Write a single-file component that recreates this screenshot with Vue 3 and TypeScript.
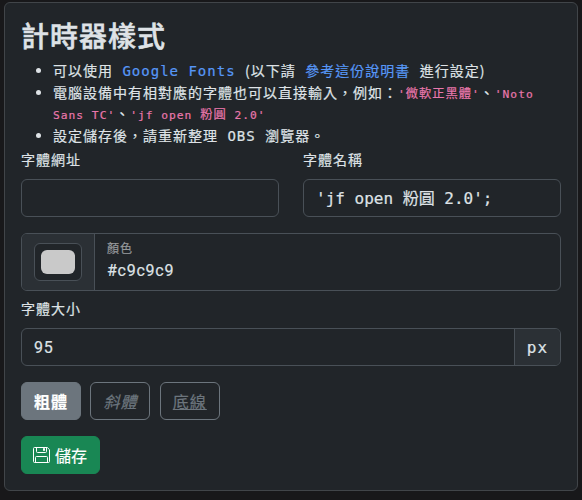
<script setup lang="ts">
import { ref } from 'vue'

const fontUrl = ref('')
const fontName = ref("'jf open 粉圓 2.0';")
const color = ref('#c9c9c9')
const fontSize = ref('95')
</script>

<template>
  <main class="card">
    <h3 class="title">計時器樣式</h3>
    <ul class="notes">
      <li>可以使用 <a class="link">Google Fonts</a> <span class="cjk">(</span>以下請 <a class="link">參考這份說明書</a> 進行設定<span class="cjk">)</span></li>
      <li class="double">電腦設備中有相對應的字體也可以直接輸入，例如：<code>'<span class="han">微軟正黑體</span>'</code>、<code>'Noto<br />Sans TC'</code>、<code>'jf open <span class="han">粉圓</span> 2.0'</code></li>
      <li>設定儲存後，請重新整理 OBS 瀏覽器。</li>
    </ul>
    <div class="row">
      <label class="field">
        <span class="label">字體網址</span>
        <input v-model="fontUrl" class="control" type="text" />
      </label>
      <label class="field">
        <span class="label">字體名稱</span>
        <input v-model="fontName" class="control" type="text" />
      </label>
    </div>
    <div class="group color-group">
      <div class="addon swatch-addon">
        <span class="swatch-frame"><span class="swatch" :style="{ background: color }"></span></span>
      </div>
      <label class="floating">
        <span class="hint">顏色</span>
        <input v-model="color" class="bare numeric" type="text" />
      </label>
    </div>
    <label class="size-field">
      <span class="label">字體大小</span>
      <span class="group size-group">
        <input v-model="fontSize" class="bare size-input numeric" type="text" />
        <span class="addon unit">px</span>
      </span>
    </label>
    <div class="toggles">
      <button class="btn active" type="button">粗體</button>
      <button class="btn italic" type="button">斜體</button>
      <button class="btn underline" type="button">底線</button>
    </div>
    <button class="btn save" type="button">
      <svg class="icon" viewBox="0 0 17 16" fill="none" stroke="currentColor" stroke-width="1">
        <path d="M1.500 .5h12.800l2.200 2.200v11.800a1 1 0 0 1-1 1h-14a1 1 0 0 1-1-1v-13a1 1 0 0 1 1-1z" />
        <path d="M3.500 .5v4a1 1 0 0 0 1 1h8a1 1 0 0 0 1-1v-4M2.500 15.500v-5a1 1 0 0 1 1-1h10a1 1 0 0 1 1 1v5" />
        <path d="M10.500 1.500h1v2h-1z" fill="currentColor" />
      </svg>
      <span>儲存</span>
    </button>
  </main>
</template>

<style>
body {
  background: #18181a;
}
</style>

<style scoped>
.card {
  box-sizing: border-box;
  width: 574px;
  height: 489px;
  margin: 2px 4px 9px;
  padding: 16px;
  border: 1px solid #414549;
  border-radius: 6px;
  background: #212529;
  color: #dee2e6;
  font-family: "DejaVu Sans Mono", "Noto Sans CJK TC", monospace;
  font-size: 14px;
  letter-spacing: 1px;
  -webkit-text-stroke: 0.2px;
}
.title {
  height: 36px;
  margin: 0 0 6px;
  padding-top: 1px;
  font-size: 28px;
  font-weight: 500;
  line-height: 36px;
  -webkit-text-stroke: 0.55px;
}
.notes {
  margin: -1px 0 3px;
  padding-left: 32px;
  line-height: 21.5px;
  list-style: none;
  white-space: nowrap;
}
.notes li {
  height: 21.5px;
}
.notes .double {
  height: 43px;
}
.notes li::before {
  content: "";
  display: inline-block;
  width: 5px;
  height: 5px;
  margin: 0 12.500px 0 -17.500px;
  border-radius: 50%;
  background: currentColor;
  vertical-align: 3px;
}
.cjk {
  font-family: "Noto Sans CJK TC", sans-serif;
  line-height: 0;
}
.link {
  color: #5797f7;
}
code {
  color: #e977ac;
  font-family: inherit;
  font-size: 11.25px;
  line-height: 0;
}
.han {
  font-size: 12.25px;
}
.row {
  display: grid;
  grid-template-columns: 1fr 1fr;
  gap: 24px;
  margin-bottom: 16px;
}
.label {
  display: block;
  height: 21px;
  margin-bottom: 8px;
  line-height: 21px;
}
.control,
.bare {
  box-sizing: border-box;
  width: 100%;
  border: 0;
  outline: 0;
  background: transparent;
  color: #dee2e6;
  font-family: inherit;
  font-size: 16px;
  letter-spacing: 0;
}
.control {
  display: block;
  height: 38px;
  padding: 5px 12px 7px;
  border: 1px solid #495057;
  border-radius: 6px;
}
.group {
  box-sizing: border-box;
  display: flex;
  overflow: hidden;
  border: 1px solid #495057;
  border-radius: 6px;
}
.addon {
  display: flex;
  align-items: center;
  justify-content: center;
  background: #2b3035;
}
.color-group {
  height: 58px;
  margin-bottom: 8px;
}
.swatch-addon {
  width: 72px;
  border-right: 1px solid #495057;
}
.swatch-frame {
  box-sizing: border-box;
  display: flex;
  width: 48px;
  height: 38px;
  padding: 6px;
  border: 1px solid #495057;
  border-radius: 6px;
  background: #212529;
}
.swatch {
  flex: 1;
  border-radius: 6px;
}
.floating {
  display: flex;
  flex: 1;
  flex-direction: column;
  padding: 6px 12px 0;
}
.hint {
  color: #94979a;
  font-size: 12px;
  line-height: 18px;
}
.bare {
  height: 24px;
  padding: 0;
}
.numeric {
  font-family: Roboto, sans-serif;
  letter-spacing: 0.75px;
}
.size-field {
  display: block;
}
.size-group {
  height: 38px;
}
.size-input {
  flex: 1;
  height: 36px;
  padding: 0 12px;
}
.unit {
  width: 45px;
  border-left: 1px solid #495057;
  font-size: 16px;
}
.toggles {
  display: flex;
  gap: 9.4px;
  margin: 16px 0;
}
.btn {
  box-sizing: border-box;
  width: 60px;
  height: 38px;
  padding: 0;
  border: 1px solid #6c757d;
  border-radius: 6px;
  background: transparent;
  color: #6c757d;
  font-family: inherit;
  font-size: 16px;
  letter-spacing: 1px;
}
.active {
  background: #6c757d;
  color: #fff;
  font-weight: 700;
}
.italic {
  font-style: italic;
}
.underline {
  text-decoration: underline;
}
.save {
  display: flex;
  align-items: center;
  gap: 5px;
  width: 79px;
  padding-left: 11px;
  border-color: #198754;
  background: #198754;
  color: #fff;
  letter-spacing: 0;
}
.icon {
  width: 17px;
  height: 16px;
}
</style>
